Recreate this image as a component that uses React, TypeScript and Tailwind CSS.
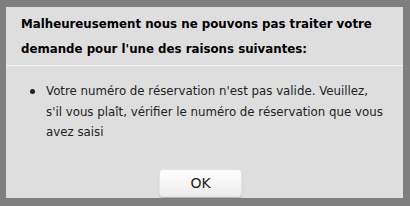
export default function App() {
  return (
    <div
      className="h-[206px] w-[410px] bg-[#7f7f7f] pl-[6px] pt-[7px]"
      style={{ fontFamily: '"DejaVu Sans", Verdana, sans-serif' }}
    >
      <div className="flex h-[191px] w-[397px] flex-col bg-[#dedede]">
        {/* header */}
        <div className="px-[15px] pt-[5px] pb-[3px] text-[11.8px] font-bold leading-[25px] text-black">
          Malheureusement nous ne pouvons pas traiter votre demande pour l'une des raisons suivantes:
        </div>
        <div className="h-px bg-[#f3f3f3]" />

        {/* body */}
        <ul className="mt-[15px] pl-[24px] pr-[17px] text-[11.8px] leading-[20.5px] text-[#222]">
          <li className="flex items-start gap-[11px]">
            <span className="mt-[8px] h-[5px] w-[5px] shrink-0 rounded-full bg-[#222]" />
            <span>
              Votre numéro de réservation n'est pas valide. Veuillez, s'il vous plaît, vérifier le numéro de
              réservation que vous avez saisi
            </span>
          </li>
        </ul>

        <div className="mt-auto mb-[1px] flex justify-center pr-[8px]">
          <button className="h-[28px] w-[83px] rounded-[4px] border border-[#e4e4e4] bg-gradient-to-b from-white to-[#ececec] text-[14px] text-[#222] shadow-[0_1px_1px_rgba(0,0,0,0.2)]">
            OK
          </button>
        </div>
      </div>
    </div>
  );
}
